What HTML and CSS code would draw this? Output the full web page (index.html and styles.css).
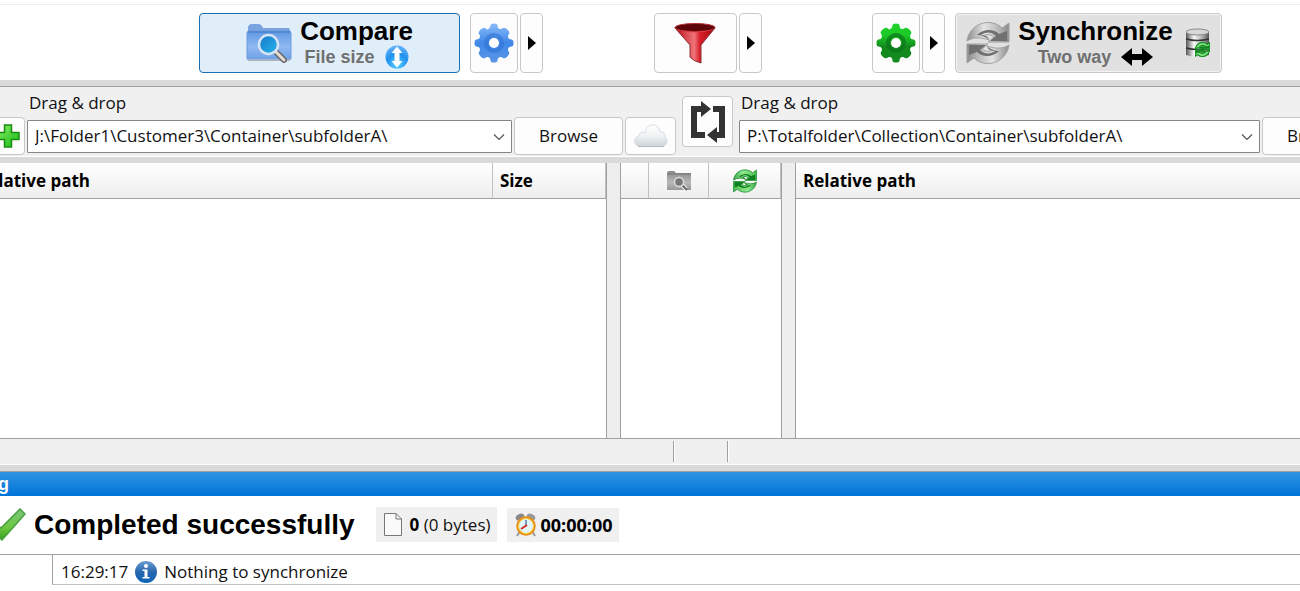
FILE: index.html
```html
<!DOCTYPE html>
<html lang="en">
<head>
<meta charset="utf-8">
<title>Folder comparison</title>
<link rel="stylesheet" href="styles.css">
</head>
<body>
<svg class="defs" aria-hidden="true">
  <defs>
    <linearGradient id="blueGear" x1="0" y1="-20" x2="0" y2="20" gradientUnits="userSpaceOnUse"><stop offset="0" stop-color="#8cbcf8"/><stop offset=".5" stop-color="#3f88e8"/><stop offset="1" stop-color="#5c96e6"/></linearGradient>
    <linearGradient id="greenGear" x1="0" y1="-20" x2="0" y2="20" gradientUnits="userSpaceOnUse"><stop offset="0" stop-color="#1fd42a"/><stop offset=".3" stop-color="#1cc828"/><stop offset=".6" stop-color="#118a1c"/><stop offset="1" stop-color="#148a22"/></linearGradient>
    <linearGradient id="folder" x1="0" y1="0" x2="0" y2="1"><stop offset="0" stop-color="#6098e4"/><stop offset=".55" stop-color="#8fb8f0"/><stop offset="1" stop-color="#6d9fe6"/></linearGradient>
    <linearGradient id="folderGrey" x1="0" y1="0" x2="0" y2="1"><stop offset="0" stop-color="#8a8a8a"/><stop offset=".6" stop-color="#b8b8b8"/><stop offset="1" stop-color="#989898"/></linearGradient>
    <linearGradient id="lens" x1="0" y1="0" x2="1" y2="1"><stop offset="0" stop-color="#1478c8"/><stop offset="1" stop-color="#28b4ec"/></linearGradient>
    <radialGradient id="ball" cx=".5" cy=".85" r=".8"><stop offset="0" stop-color="#58d0ff"/><stop offset=".6" stop-color="#2090f0"/><stop offset="1" stop-color="#60b0f8"/></radialGradient>
    <linearGradient id="funnel" x1="0" y1="0" x2="1" y2="0"><stop offset="0" stop-color="#b80c14"/><stop offset=".48" stop-color="#f0747a"/><stop offset=".62" stop-color="#d8202a"/><stop offset="1" stop-color="#a80810"/></linearGradient>
    <linearGradient id="silver" x1="0" y1="0" x2="1" y2="0"><stop offset="0" stop-color="#8c8c8c"/><stop offset=".4" stop-color="#e4e4e4"/><stop offset=".7" stop-color="#c0c0c0"/><stop offset="1" stop-color="#8c8c8c"/></linearGradient>
    <linearGradient id="greenArrow" x1="0" y1="0" x2="1" y2="0"><stop offset="0" stop-color="#38a848"/><stop offset=".4" stop-color="#90e890"/><stop offset="1" stop-color="#4cc04c"/></linearGradient>
    <linearGradient id="drum" x1="0" y1="0" x2="1" y2="0"><stop offset="0" stop-color="#555"/><stop offset=".35" stop-color="#fafafa"/><stop offset=".7" stop-color="#b0b0b0"/><stop offset="1" stop-color="#555"/></linearGradient>
    <linearGradient id="cloud" x1="0" y1="0" x2="0" y2="1"><stop offset="0" stop-color="#fff"/><stop offset=".5" stop-color="#f0f3f4"/><stop offset="1" stop-color="#cbd4d8"/></linearGradient>
    <linearGradient id="plus" x1="0" y1="0" x2="1" y2="1"><stop offset="0" stop-color="#8cf06c"/><stop offset="1" stop-color="#12b80c"/></linearGradient>
    <linearGradient id="tick" x1="0" y1="0" x2="0" y2="1"><stop offset="0" stop-color="#7cc47c"/><stop offset=".6" stop-color="#6cc840"/><stop offset="1" stop-color="#3c9c20"/></linearGradient>
    <linearGradient id="info" x1="0" y1="0" x2="0" y2="1"><stop offset="0" stop-color="#6c9cd0"/><stop offset=".5" stop-color="#2868b0"/><stop offset="1" stop-color="#0c64b8"/></linearGradient>
    <symbol id="i-gear" viewBox="-20 -20 40 40">
      <path d="M-6.500-13.500Q-3.500-15-3.500-17.500Q-3.500-19.500 0-19.500T3.500-17.500Q3.500-15 5.200-14.300Q7-13.500 8.900-14.900Q10.500-16.300 13.400-13.400T14.900-8.900Q13.500-7 14.300-5.200Q15-3.500 17.500-3.500Q19.500-3.500 19.500 0T17.500 3.500Q15 3.500 14.300 5.200Q13.500 7 14.900 8.900Q16.300 10.500 13.400 13.400T8.900 14.900Q7 13.500 5.200 14.300Q3.500 15 3.500 17.500Q3.500 19.500 0 19.500T-3.500 17.500Q-3.500 15-5.200 14.300Q-7 13.500-8.900 14.900Q-10.500 16.300-13.400 13.400T-14.900 8.900Q-13.500 7-14.300 5.200Q-15 3.500-17.500 3.500Q-19.500 3.500-19.500 0T-17.500-3.500Q-15-3.500-14.300-5.200Q-13.500-7-14.900-8.900Q-16.300-10.500-13.400-13.400T-8.900-14.900Q-7.500-13.500-6.500-13.500z"/>
    </symbol>
    <symbol id="i-cycle" viewBox="0 0 44 44">
      <g id="cycle-half">
        <path d="M1 20C3 6 17-2 30 3Q33 4 36 7L43 2V21H22L28 16C24 13 21 13 17 15Q22 16 23 19C15 16 7 16 1 20z"/>
        <path d="M11 14C18 7 28 8 33 13L41 10V20H24L30 15C25 10 19 11 15 14Q21 14 23 18Q17 14 11 14z" fill="currentColor" stroke="none"/>
      </g>
      <use href="#cycle-half" transform="rotate(180 22 22)"/>
    </symbol>
    <symbol id="i-chevron" viewBox="0 0 12 8"><path d="M1 1.500L6 6.500L11 1.500" fill="none" stroke="#555" stroke-width="1.200"/></symbol>
  </defs>
</svg>

<header class="toolbar">
  <div class="group">
    <button class="btn action compare">
      <svg width="46" height="40" viewBox="0 0 46 40">
        <path d="M2 5Q2 1 6 1H12Q15 1 16 3L17 5H42Q44 5 44 8V12H2z" fill="#7aa4e0"/>
        <rect x="1" y="8" width="44" height="29" rx="2" fill="url(#folder)" stroke="#6c9ce0"/>
        <path d="M2 8H44V10H2z" fill="#5488d0"/>
        <path d="M2 37H44" stroke="#a8b4c4" stroke-width="2"/>
        <path d="M30 29L38 37" stroke="#666" stroke-width="6" stroke-linecap="round"/>
        <path d="M30 29L38 37" stroke="#e4ddd4" stroke-width="3" stroke-linecap="round"/>
        <circle cx="22.500" cy="21.500" r="9.500" fill="url(#lens)" stroke="#d4e4f4" stroke-width="2.500"/>
      </svg>
      <span class="stack"><span class="title">Compare</span>
        <span class="sub">File size
          <svg width="24" height="24" viewBox="0 0 24 24"><circle cx="12" cy="12" r="11.500" fill="url(#ball)"/><path d="M12 1.500L17.500 8H14.500V16H17.500L12 22.500L6.500 16H9.500V8H6.500z" fill="#fff"/></svg>
        </span></span>
    </button>
    <div class="pair">
      <button class="btn tool" aria-label="Comparison settings"><svg width="40" height="40" viewBox="0 0 40 40"><use href="#i-gear" width="40" height="40" fill="url(#blueGear)"/><circle cx="20" cy="20" r="8" fill="none" stroke="#2c6cd0" stroke-width="4" opacity=".5"/><circle cx="20" cy="20" r="5" fill="#fff"/></svg></button>
      <button class="btn more" aria-label="More comparison settings"><svg width="9" height="14" viewBox="0 0 9 14"><path d="M1 0L9 7L1 14z"/></svg></button>
    </div>
  </div>
  <div class="pair">
    <button class="btn tool wide" aria-label="Filter"><svg width="42" height="42" viewBox="0 0 42 42">
      <path d="M1 6L16 23V35Q19 39 27 41V23L41 6z" fill="url(#funnel)" stroke="#8a3038"/>
      <ellipse cx="21" cy="5.500" rx="20" ry="4" fill="#5c0408" stroke="#b83038"/>
      <path d="M2 7Q21 14 40 7Q30 10 21 10T2 7" fill="#f04048"/></svg></button>
    <button class="btn more" aria-label="More filters"><svg width="9" height="14" viewBox="0 0 9 14"><path d="M1 0L9 7L1 14z"/></svg></button>
  </div>
  <div class="group">
    <div class="pair">
      <button class="btn tool" aria-label="Synchronization settings"><svg width="40" height="40" viewBox="0 0 40 40"><use href="#i-gear" width="40" height="40" fill="url(#greenGear)"/><circle cx="20" cy="20" r="8" fill="none" stroke="#0c7418" stroke-width="4" opacity=".7"/><circle cx="20" cy="20" r="5" fill="#fff"/></svg></button>
      <button class="btn more" aria-label="More synchronization settings"><svg width="9" height="14" viewBox="0 0 9 14"><path d="M1 0L9 7L1 14z"/></svg></button>
    </div>
    <button class="btn action sync">
      <svg class="silver" width="44" height="44" viewBox="0 0 44 44"><use href="#i-cycle" fill="url(#silver)" stroke="#a0a0a0"/></svg>
      <span class="stack"><span class="title">Synchronize</span>
        <span class="sub">Two way
          <svg width="32" height="18" viewBox="0 0 32 18"><path d="M0 9L11 0V6H21V0L32 9L21 18V12H11V18z" fill="#000"/></svg>
        </span></span>
      <svg width="26" height="30" viewBox="0 0 26 30">
        <path d="M1 4V27Q12 31 24 27V4z" fill="url(#drum)"/>
        <ellipse cx="12.500" cy="4" rx="11.500" ry="3" fill="#d8d8d8" stroke="#888"/>
        <path d="M1 11Q12 14 24 11M1 20Q12 23 24 20" fill="none" stroke="#333" stroke-width="1.500"/>
        <svg class="green" x="10" y="14" width="15" height="15"><use href="#i-cycle" fill="#7ce07c" stroke="#0a8a1a" stroke-width="3"/></svg>
      </svg>
    </button>
  </div>
</header>

<section class="paths">
  <div class="side left">
    <label for="left-path">Drag &amp; drop</label>
    <div class="row">
      <button class="btn small add" aria-label="Add folder pair"><svg width="24" height="24" viewBox="0 0 24 24"><path d="M8.500 1H15.500V8.500H23V15.500H15.500V23H8.500V15.500H1V8.500H8.500z" fill="url(#plus)" stroke="#188c10" stroke-width="1.500"/></svg></button>
      <div class="combo"><select id="left-path"><option>J:\Folder1\Customer3\Container\subfolderA\</option></select><svg class="chev" width="12" height="8"><use href="#i-chevron"/></svg></div>
      <button class="btn small browse">Browse</button>
      <button class="btn small cloud" aria-label="Cloud storage"><svg width="34" height="24" viewBox="0 0 34 24"><path d="M6 22.500C-1 22-1 13 5 12C5 8 9 7 11 9C12-1 25-2 26 8C31 8 32 11 31 13C35 16 33 22 28 22.500z" fill="url(#cloud)" stroke="#d8dde0"/><path d="M4 22.500H30" stroke="#b0bcc2"/></svg></button>
    </div>
  </div>
  <button class="btn swap" aria-label="Swap sides"><svg width="36" height="42" viewBox="0 0 36 42"><path d="M15 34H4V8H13M23 8H32V34H27" fill="none" stroke="#333" stroke-width="6"/><path d="M11 0L21 8L11 16zM27 26L17 34L27 42z" fill="#333"/></svg></button>
  <div class="side right">
    <label for="right-path">Drag &amp; drop</label>
    <div class="row">
      <div class="combo"><select id="right-path"><option>P:\Totalfolder\Collection\Container\subfolderA\</option></select><svg class="chev" width="12" height="8"><use href="#i-chevron"/></svg></div>
      <button class="btn small browse">Browse</button>
    </div>
  </div>
</section>

<main class="panes">
  <div class="pane pane-left"><table><thead><tr><th class="outset">Relative path</th><th class="size">Size</th></tr></thead></table></div>
  <div class="pane pane-mid"><table><thead><tr><th class="tick-col"></th>
    <th class="cat-col"><svg width="24" height="22" viewBox="0 0 24 22"><path d="M0 3Q0 1 2 1H7L9 3H24V20H0z" fill="url(#folderGrey)"/><path d="M0 4H24" stroke="#777"/><path d="M15 15L19 19" stroke="#eee" stroke-width="4"/><path d="M15 15L20 20" stroke="#666" stroke-width="2"/><circle cx="12" cy="12" r="4.500" fill="#777" stroke="#ddd" stroke-width="1.500"/></svg></th>
    <th><svg class="green" width="24" height="24" viewBox="0 0 44 44"><use href="#i-cycle" fill="url(#greenArrow)" stroke="#259038" stroke-width="1.500"/></svg></th></tr></thead></table></div>
  <div class="pane pane-right"><table><thead><tr><th>Relative path</th></tr></thead></table></div>
</main>

<div class="status"><span></span><span class="cell"></span><span class="cell"></span></div>

<section class="log">
  <h2>Log</h2>
  <div class="summary">
    <svg class="check" width="42" height="34" viewBox="0 0 42 34"><path d="M2 19L8 13L17 20L36 1L41 6L18 32z" fill="url(#tick)" stroke="#48a040" stroke-width="1.500"/></svg>
    <h1>Completed successfully</h1>
    <div class="chip items"><svg width="18" height="23" viewBox="0 0 18 23"><path d="M.5.5H12L17.500 6V22.500H.5z" fill="#fafafa" stroke="#777"/><path d="M12 .5V6H17.500" fill="none" stroke="#777"/></svg><span><b>0</b> (0 bytes)</span></div>
    <div class="chip time"><svg width="22" height="24" viewBox="0 0 22 24"><path d="M5 18L2 23M17 18L20 23" stroke="#999" stroke-width="2"/><ellipse cx="5" cy="4" rx="4.500" ry="3" fill="#888" transform="rotate(-25 5 4)"/><ellipse cx="16" cy="4" rx="4.500" ry="3" fill="#999" transform="rotate(25 16 4)"/><circle cx="11" cy="13" r="8.500" fill="#e2f4fc" stroke="#e89018" stroke-width="2.500"/><circle cx="11" cy="13" r="7.500" fill="none" stroke="#f8d850"/><path d="M11 7V13" stroke="#5878a8" stroke-width="1.500"/><path d="M12 12L6 16" stroke="#d03020" stroke-width="2"/></svg><b>00:00:00</b></div>
  </div>
  <div class="entries">
    <div class="entry"><time>16:29:17</time>
      <svg width="22" height="22" viewBox="0 0 22 22"><circle cx="11" cy="11" r="11" fill="url(#info)"/><circle cx="11" cy="5" r="2" fill="#fff"/><path d="M7.500 8.500H12.500V16H14.500V17.500H7.500V16H9.500V10H7.500z" fill="#fff"/></svg>
      <span>Nothing to synchronize</span></div>
  </div>
</section>
</body>
</html>
```

FILE: styles.css
```css
* { box-sizing: border-box; }

body {
  margin: 0;
  min-height: 100vh;
  display: flex;
  flex-direction: column;
  overflow-x: hidden;
  background: #fff;
  color: #111;
  font: 17px/24px "Open Sans", "Noto Sans", sans-serif;
}

svg { display: block; flex: none; }
.defs { position: absolute; width: 0; height: 0; }
.silver { color: #707070; }
.green { color: #118020; }

.btn {
  display: flex;
  align-items: center;
  justify-content: center;
  padding: 0;
  border: 1px solid #c8c8c8;
  border-radius: 4px;
  background: #fdfdfd;
  color: #111;
  font: inherit;
}

/* Toolbar */
.toolbar {
  display: flex;
  justify-content: space-between;
  margin-top: 4px;
  padding: 8px 78px 7px 199px;
  border-top: 1px solid #ececec;
}
.group { display: flex; gap: 10px; }
.pair { display: flex; gap: 2px; }
.toolbar .btn { height: 60px; }
.tool { width: 48px; }
.wide { width: 83px; }
.more { width: 23px; }
.action { font-family: "Liberation Sans", Arial, sans-serif; font-weight: bold; gap: 8px; }
.compare { width: 261px; background: #e0eef9; border-color: #1a6fb0; }
.sync { width: 267px; background: #e1e1e1; box-shadow: inset 0 0 0 1px #f4f4f4; }
.stack { display: flex; flex-direction: column; align-items: center; }
.title { font-size: 26px; line-height: 28px; color: #000; }
.sub { display: flex; align-items: center; gap: 10px; font-size: 18px; line-height: 24px; color: #707070; }
.sync .stack { margin-right: 4px; }

/* Folder paths */
.paths {
  display: grid;
  grid-template-columns: minmax(0, 676fr) 51px minmax(0, 561fr);
  column-gap: 6px;
  border-top: 6px solid #dadada;
  border-bottom: 6px solid #dadada;
  background: #f0f0f0;
  box-shadow: inset 0 1px #a0a0a0, inset 0 -1px #fff;
  overflow: hidden;
}
.side { padding: 5px 0 2px; }
.side label { display: block; height: 26px; line-height: 24px; }
.left label { margin-left: 29px; }
.right label { margin-left: 2px; }
.row { display: flex; align-items: center; gap: 2px; }
.small { height: 38px; flex: none; }
.add { width: 51px; margin-left: -26px; }
.add svg { margin-left: 17px; }
.browse { width: 109px; }
.cloud { width: 51px; }
.right .row { margin-right: -71px; }
.combo { position: relative; flex: 1; min-width: 0; }
.combo select {
  display: block;
  width: 100%;
  height: 33px;
  padding: 0 30px 0 7px;
  border: 1px solid #868686;
  border-radius: 1px;
  background: #fff;
  color: #111;
  font: inherit;
  appearance: none;
}
.chev { position: absolute; right: 7px; top: 13px; pointer-events: none; }
.swap { width: 51px; height: 51px; margin-top: 10px; }

/* Comparison panes */
.panes {
  flex: 1;
  display: grid;
  grid-template-columns: minmax(0, 607fr) 162px minmax(0, 505fr);
  column-gap: 13px;
  min-height: 275px;
  background: #eee;
}
.pane { background: #fff; overflow: hidden; }
.pane-left { border-right: 1px solid #a0a0a0; }
.pane-mid { border: solid #a0a0a0; border-width: 0 1px; }
.pane-right { border-left: 1px solid #a0a0a0; }
table { width: 100%; border-collapse: separate; border-spacing: 0; table-layout: fixed; }
th {
  height: 36px;
  padding: 0 7px;
  border-bottom: 1px solid #a0a0a0;
  border-right: 1px solid #c0c0c0;
  background: linear-gradient(#fff, #eee);
  color: #000;
  text-align: left;
  font-weight: bold;
}
.pane-right th { border-right: 0; }
.outset { text-indent: -30px; }
.size { width: 113px; }
.tick-col { width: 28px; }
.cat-col { width: 60px; }
th svg { margin: 0 auto; }

/* Status bar */
.status {
  display: grid;
  grid-template-columns: 673fr 54px 573fr;
  height: 27px;
  padding: 2px 0;
  border-top: 1px solid #a0a0a0;
  border-bottom: 1px solid #fff;
  background: #f0f0f0;
}
.cell { border-left: 1px solid #a0a0a0; box-shadow: inset 1px 0 #fff; }

/* Log */
.log { border-top: 6px solid #dadada; }
.log h2 {
  margin: 0;
  height: 25px;
  border-top: 1px solid #a0a0a0;
  background: linear-gradient(#2f93e2, #0074d8);
  color: #fff;
  font: bold 18px/24px "Liberation Sans", Arial, sans-serif;
  text-indent: -24px;
}
.summary { display: flex; align-items: flex-end; padding: 11px 0 12px; }
.check { margin-left: -16px; }
h1 { margin: 0 21px 0 8px; color: #000; font: bold 28px/34px "Liberation Sans", Arial, sans-serif; }
.chip { display: flex; align-items: center; gap: 8px; height: 35px; padding: 0 6px 0 8px; background: #f0f0f0; white-space: nowrap; }
.time { height: 34px; margin-left: 10px; gap: 4px; }
.time b { font-size: 18px; }
b { color: #000; }
.entries { min-height: 38px; padding-left: 52px; border-top: 1px solid #a0a0a0; }
.entry {
  display: flex;
  align-items: center;
  gap: 7px;
  height: 30px;
  padding: 4px 0 0 8px;
  border-left: 1px solid #a0a0a0;
  border-bottom: 1px solid #c0c0c0;
}
```
